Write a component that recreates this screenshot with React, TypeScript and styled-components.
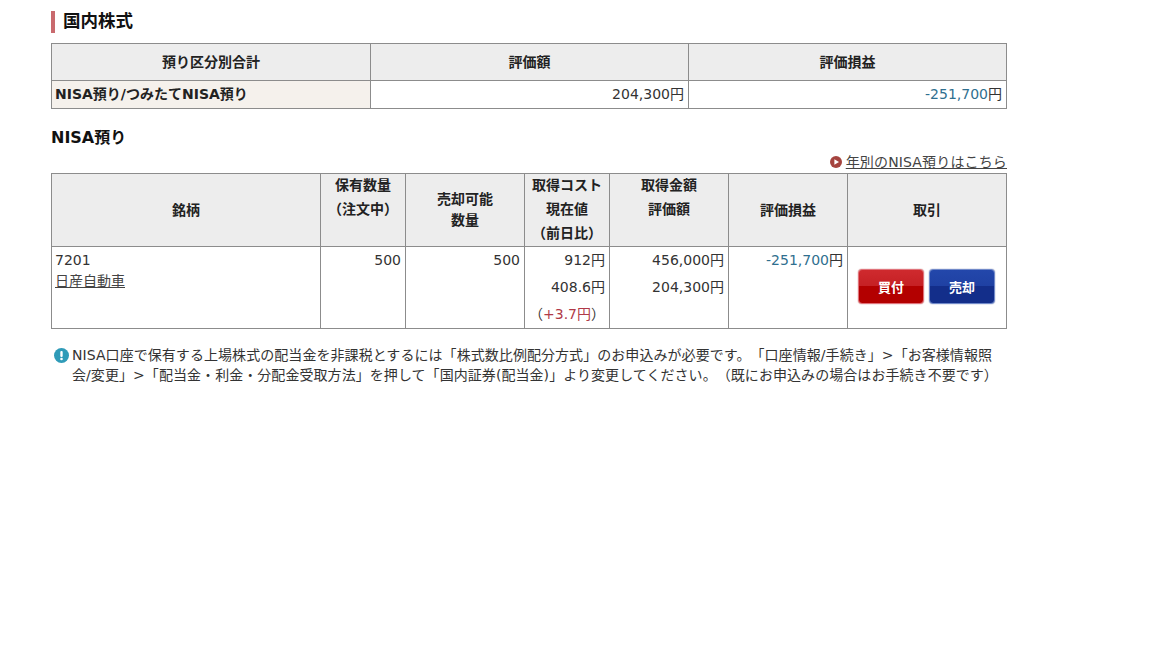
import React from 'react';
import styled, { createGlobalStyle } from 'styled-components';

const GlobalStyle = createGlobalStyle`
  html, body {
    margin: 0;
    padding: 0;
    background: #fff;
    color: #333;
    font-family: "DejaVu Sans", "Noto Sans CJK JP", sans-serif;
    font-size: 14px;
  }
`;

const Page = styled.div`
  width: 956px;
  padding: 11px 0 0 51px;
`;

const Title = styled.h2`
  margin: 0 0 10px;
  height: 22px;
  border-left: 4px solid #c96a6e;
  padding-left: 8px;
  font-size: 17.5px;
  line-height: 21px;
  font-weight: bold;
  color: #111;
`;

const SubTitle = styled.h3`
  margin: 18px 0 0;
  font-size: 16px;
  line-height: 22px;
  font-weight: bold;
  color: #111;
`;

const Table = styled.table`
  width: 956px;
  border-collapse: collapse;
  table-layout: fixed;
`;

const Col = styled.col<{ $w?: number }>`
  width: ${(p) => (p.$w ? `${p.$w}px` : 'auto')};
`;

const Th = styled.th<{ $h?: number; $top?: boolean; $lh?: number }>`
  background: #ededed;
  border: 1px solid #8c8c8c;
  padding: 0;
  height: ${(p) => (p.$h ? `${p.$h}px` : 'auto')};
  font-size: 14px;
  font-weight: bold;
  line-height: ${(p) => p.$lh ?? 24}px;
  color: #222;
  text-align: center;
  vertical-align: ${(p) => (p.$top ? 'top' : 'middle')};
`;

const HeadLines = styled.div`
  margin-top: -1px;
`;

const Td = styled.td<{ $tint?: boolean; $h?: number }>`
  border: 1px solid #8c8c8c;
  padding: 0 4px;
  height: ${(p) => p.$h ?? 27}px;
  font-size: 14px;
  line-height: 27px;
  text-align: right;
  vertical-align: top;
  color: #333;
  background: ${(p) => (p.$tint ? '#f5f1ec' : '#fff')};
`;

const RowLabel = styled.span`
  display: block;
  margin-left: -1px;
  text-align: left;
  white-space: nowrap;
  font-weight: bold;
  font-size: 14px;
  color: #222;
`;

const Loss = styled.span`
  color: #2f6f8f;
`;

const Gain = styled.span`
  color: #b03a48;
`;

const LinkRow = styled.div`
  display: flex;
  justify-content: flex-end;
  align-items: center;
  gap: 4px;
  height: 14px;
  line-height: 14px;
  margin-top: 6px;
  margin-bottom: 4px;
`;

const TextLink = styled.a<{ $wide?: boolean }>`
  color: #444;
  text-decoration: underline;
  font-size: 14px;
  letter-spacing: ${(p) => (p.$wide ? '0.15px' : '0')};
`;

const StockCell = styled.div`
  margin-left: -1px;
  text-align: left;
  line-height: 21px;
  padding-top: 3px;
`;

const Actions = styled.div`
  display: flex;
  gap: 5px;
  padding: 22px 0 0 6px;
`;

const TradeButton = styled.button<{ $variant: 'buy' | 'sell' }>`
  width: 66px;
  height: 35px;
  padding: 0;
  border-radius: 4px;
  border: 1px solid ${(p) => (p.$variant === 'buy' ? '#e0727a' : '#7089c9')};
  box-shadow: 0 0 1px ${(p) => (p.$variant === 'buy' ? '#a01010' : '#1a3080')};
  background: ${(p) =>
    p.$variant === 'buy'
      ? 'linear-gradient(#cf2a2e 0, #c52024 50%, #b30000 50%, #b30000 100%)'
      : 'linear-gradient(#2347ab 0, #1f41a3 50%, #132e8a 50%, #132e8a 100%)'};
  color: #fff;
  font-family: inherit;
  font-size: 13px;
  font-weight: bold;
`;

const Notice = styled.div`
  display: flex;
  margin: 16px 0 0 3px;
  width: 945px;
  font-size: 14px;
  line-height: 20px;
  color: #333;
`;

const NoticeIcon = styled.svg`
  flex: none;
  width: 15px;
  height: 15px;
  margin: 3px 3px 0 0;
`;

const NoticeText = styled.p`
  margin: 0;
  letter-spacing: 0.06px;
  text-spacing-trim: space-all;
`;

const App: React.FC = () => {
  return (
    <Page>
      <GlobalStyle />
      <Title>国内株式</Title>
      <Table>
        <colgroup>
          <Col $w={319} />
          <Col $w={318} />
          <Col />
        </colgroup>
        <thead>
          <tr>
            <Th $h={36}>預り区分別合計</Th>
            <Th>評価額</Th>
            <Th>評価損益</Th>
          </tr>
        </thead>
        <tbody>
          <tr>
            <Td $tint>
              <RowLabel>NISA預り/つみたてNISA預り</RowLabel>
            </Td>
            <Td>204,300円</Td>
            <Td>
              <Loss>-251,700</Loss>円
            </Td>
          </tr>
        </tbody>
      </Table>

      <SubTitle>NISA預り</SubTitle>
      <LinkRow>
        <svg width="12" height="12" viewBox="0 0 12 12">
          <circle cx="6" cy="6" r="6" fill="#a5443f" />
          <path d="M4.4 3.2 L9 6 L4.4 8.8 Z" fill="#fff" />
        </svg>
        <TextLink $wide>年別のNISA預りはこちら</TextLink>
      </LinkRow>
      <Table>
        <colgroup>
          <Col $w={269} />
          <Col $w={85} />
          <Col $w={119} />
          <Col $w={85} />
          <Col $w={119} />
          <Col $w={119} />
          <Col />
        </colgroup>
        <thead>
          <tr>
            <Th $h={72}>銘柄</Th>
            <Th $top>
              <HeadLines>
                保有数量
                <br />
                （注文中）
              </HeadLines>
            </Th>
            <Th $lh={21}>
              売却可能
              <br />
              数量
            </Th>
            <Th $top>
              <HeadLines>
                取得コスト
                <br />
                現在値
                <br />
                （前日比）
              </HeadLines>
            </Th>
            <Th $top>
              <HeadLines>
                取得金額
                <br />
                評価額
              </HeadLines>
            </Th>
            <Th>評価損益</Th>
            <Th>取引</Th>
          </tr>
        </thead>
        <tbody>
          <tr>
            <Td $h={81}>
              <StockCell>
                7201
                <br />
                <TextLink>日産自動車</TextLink>
              </StockCell>
            </Td>
            <Td>500</Td>
            <Td>500</Td>
            <Td>
              912円
              <br />
              408.6円
              <br />
              （<Gain>+3.7円</Gain>）
            </Td>
            <Td>
              456,000円
              <br />
              204,300円
            </Td>
            <Td>
              <Loss>-251,700</Loss>円
            </Td>
            <Td>
              <Actions>
                <TradeButton $variant="buy">買付</TradeButton>
                <TradeButton $variant="sell">売却</TradeButton>
              </Actions>
            </Td>
          </tr>
        </tbody>
      </Table>
      <Notice>
        <NoticeIcon viewBox="0 0 15 15">
          <circle cx="7.5" cy="7.5" r="7.5" fill="#2f9bb8" />
          <rect x="6.3" y="3" width="2.4" height="6" rx="1" fill="#fff" />
          <circle cx="7.5" cy="11" r="1.3" fill="#fff" />
        </NoticeIcon>
        <NoticeText>
          NISA口座で保有する上場株式の配当金を非課税とするには「株式数比例配分方式」のお申込みが必要です。「口座情報/手続き」{'>'}「お客様情報照会/変更」{'>'}「配当金・利金・分配金受取方法」を押して「国内証券(配当金)」より変更してください。（既にお申込みの場合はお手続き不要です）
        </NoticeText>
      </Notice>
    </Page>
  );
};

export default App;
